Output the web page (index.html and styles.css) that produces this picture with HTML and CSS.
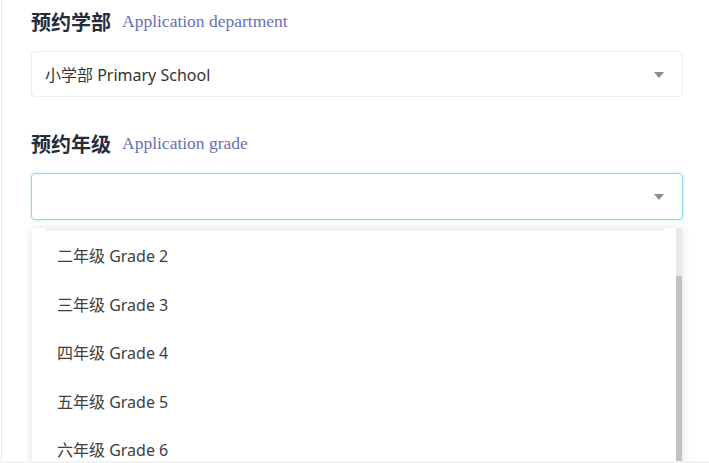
FILE: index.html
```html
<!DOCTYPE html>
<html lang="zh-CN">
<head>
<meta charset="utf-8">
<title>预约</title>
<link rel="stylesheet" href="styles.css">
</head>
<body>
<div class="viewport">
  <div class="page">
    <div class="field">
      <div class="label"><span class="label-cn">预约学部</span><span class="label-en">Application department</span></div>
      <div class="select">
        <span class="value">小学部 Primary School</span>
        <svg class="arrow" width="10" height="6" viewBox="0 0 10 6"><path d="M0 0 H10 L5 6 Z" fill="#8c8c8c"/></svg>
      </div>
    </div>
    <div class="field field-second">
      <div class="label"><span class="label-cn">预约年级</span><span class="label-en">Application grade</span></div>
      <div class="select-wrap">
        <div class="select select-focus">
          <span class="value"></span>
          <svg class="arrow" width="10" height="6" viewBox="0 0 10 6"><path d="M0 0 H10 L5 6 Z" fill="#8c8c8c"/></svg>
        </div>
        <div class="dropdown">
          <div class="options">
            <div class="prev-edge"></div>
            <div class="option">二年级 Grade 2</div>
            <div class="option">三年级 Grade 3</div>
            <div class="option">四年级 Grade 4</div>
            <div class="option">五年级 Grade 5</div>
            <div class="option">六年级 Grade 6</div>
          </div>
          <div class="scrollbar"><div class="thumb"></div></div>
        </div>
      </div>
    </div>
  </div>
</div>
</body>
</html>
```

FILE: styles.css
```css
* { box-sizing: border-box; }
html, body { margin: 0; padding: 0; }
body {
  background: #f2f2f2;
  font-family: "Noto Sans", "Noto Sans CJK SC", sans-serif;
}
.viewport {
  height: 461px;
  overflow: hidden;
  background: #ffffff;
}
.page {
  margin-left: 1px;
  border-left: 1px solid #ececec;
  height: 100%;
  padding: 9px 26px 0 29px;
}
.label {
  display: flex;
  align-items: center;
  height: 24px;
  margin-bottom: 18px;
}
.label-cn {
  font-family: "Noto Sans CJK SC", sans-serif;
  font-size: 20px;
  font-weight: 700;
  color: #272c3b;
  margin-right: 11px;
}
.label-en {
  font-family: "Liberation Serif", serif;
  font-size: 17.5px;
  color: #6a6fb6;
  padding-top: 1px;
}
.field-second { margin-top: 34px; }
.field-second .label { margin-bottom: 18px; }
.select {
  height: 46px;
  border: 1px solid #ececec;
  border-radius: 4px;
  display: flex;
  align-items: center;
  justify-content: space-between;
  padding: 0 18px 0 13px;
  background: #fff;
}
.value {
  font-size: 16px;
  color: #333;
}
.arrow { display: block; margin-top: 1px; }
.select-focus {
  height: 47px;
  border-color: #93d6f4;
  box-shadow: 0 0 3px rgba(120, 205, 245, 0.55);
}
.select-wrap { position: relative; }
.dropdown {
  position: absolute;
  left: 1px;
  right: 1px;
  top: 55px;
  height: 240px;
  background: #fff;
  border-radius: 4px 4px 0 0;
  box-shadow: 0 1px 10px rgba(0, 0, 0, 0.12);
  display: flex;
}
.options {
  flex: 1;
}
.prev-edge {
  height: 3px;
  margin-left: 14px;
  margin-right: 12px;
  background: #f1f1f1;
}
.option {
  height: 48.5px;
  display: flex;
  align-items: center;
  padding-left: 25px;
  font-size: 16px;
  color: #404040;
}
.scrollbar {
  width: 6px;
  background: #e8e8e8;
  border-radius: 2px 2px 0 0;
  padding-top: 48px;
}
.thumb {
  background: #c1c1c1;
  height: 100%;
}
```
